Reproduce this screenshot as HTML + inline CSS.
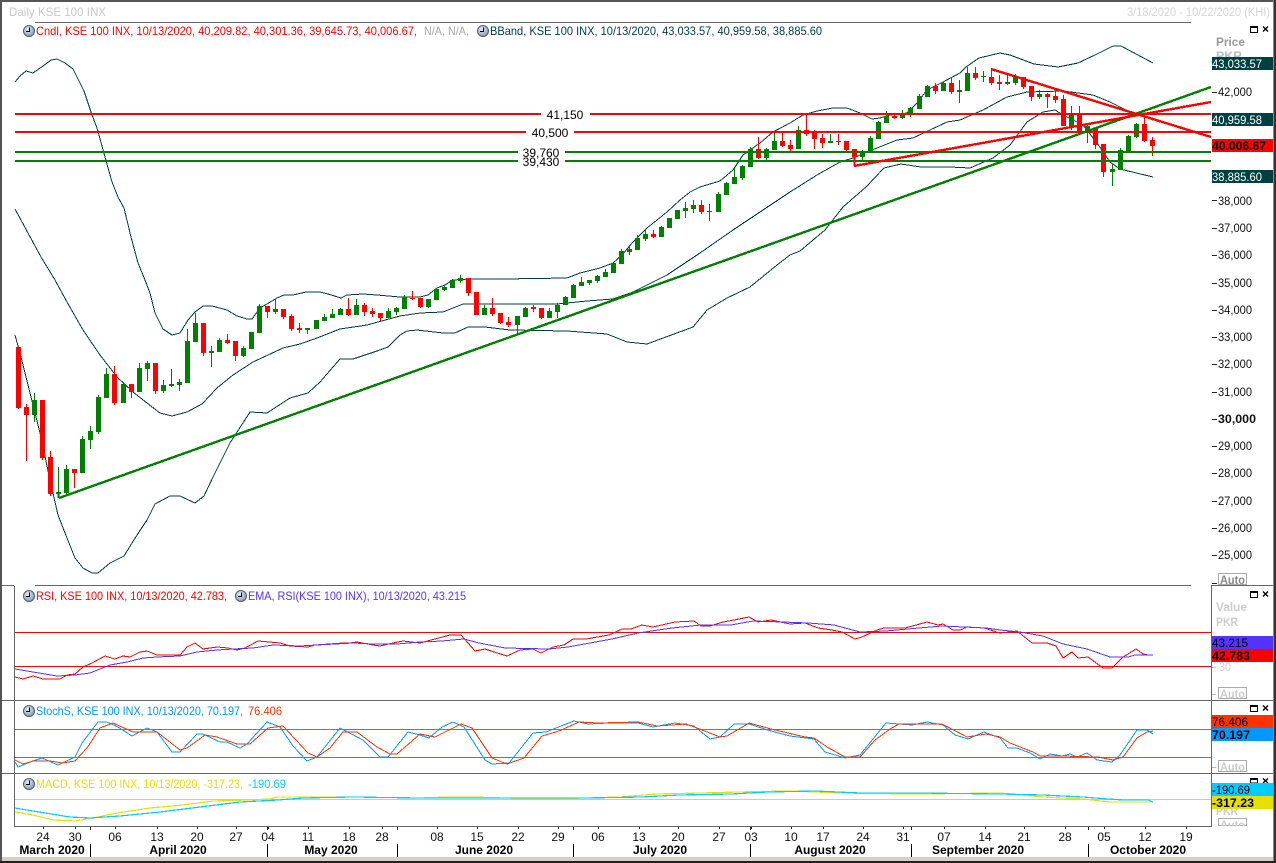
<!DOCTYPE html>
<html>
<head>
<meta charset="utf-8">
<title>Daily KSE 100 INX</title>
<style>
html,body{margin:0;padding:0;background:#fff;width:1276px;height:863px;overflow:hidden}
svg{display:block;position:absolute;left:0;top:0}
text{font-family:"Liberation Sans",Arial,sans-serif;font-size:12px;white-space:pre}
.b{font-weight:bold}
.ax{fill:#111}
.sh{fill:none;shape-rendering:crispEdges}
.ln{fill:none;shape-rendering:crispEdges;stroke-width:1}
.fr{stroke:#666;stroke-width:1;fill:none;shape-rendering:crispEdges}
.tick{stroke:#222;stroke-width:1;fill:none;shape-rendering:crispEdges}
</style>
</head>
<body>
<svg width="1276" height="863" viewBox="0 0 1276 863" xmlns="http://www.w3.org/2000/svg">
<defs>
<radialGradient id="cg" cx="40%" cy="35%" r="70%"><stop offset="0" stop-color="#e4ecf4"/><stop offset="1" stop-color="#7f96b0"/></radialGradient>
<g id="clk"><circle cx="6" cy="6" r="5.5" fill="url(#cg)" stroke="#4d5d72" stroke-width="1"/><path d="M6.5 2.5V6.5H3" fill="none" stroke="#000" stroke-width="1" shape-rendering="crispEdges"/></g>
</defs>

<rect width="1276" height="863" fill="#fff"/>

<!-- bollinger bands -->
<g class="ln" stroke="#003c3c" fill="none">
<polyline class="ln" stroke="#003c3c" points="15,82 20,76 26,71 33,73 43,66 51,60 57,59 65,63 73,69 77,77 84,91 91,112 97,128 105,157 112,182 118,197 124,208 131,237 138,263 145,280 150,293 155,313 163,329 172,335 180,333 188,320 195,312 203,306 212,306 227,310 237,316 247,319 252,319 260,308 267,304 277,298 284,295 293,295 306,292 320,292 328,294 341,298 347,295 363,294 377,295 400,297 420,297 428,295 437,288 445,285 453,280 470,279 503,279 567,278 580,273 600,268 613,263 622,255 633,242 647,228 667,212 680,200 690,192 700,187 720,181 733,170 743,155 760,143 773,132 790,123 803,115 817,111 833,108 847,108 860,113 872,119 880,118 890,115 907,113 917,103 927,90 943,82 960,73 966,67 979,58 1000,53 1010,55 1034,64 1058,67 1078,63 1095,55 1113,46 1121,46 1153,63"/>
<polyline class="ln" stroke="#003c3c" points="15,209 28,233 41,257 55,280 67,302 83,330 100,355 117,377 133,392 147,403 160,413 172,416 187,412 202,404 217,388 233,375 253,362 283,348 300,344 317,338 340,329 367,325 400,316 420,313 443,312 463,304 500,304 557,304 587,301 613,299 633,292 667,275 700,253 733,230 763,210 790,192 817,175 840,162 853,158 877,148 897,140 913,138 930,130 947,122 960,120 983,110 1007,97 1027,92 1063,91 1093,95 1110,102 1130,112 1153,120"/>
<polyline class="ln" stroke="#003c3c" points="15,335 20,353 30,393 40,433 50,480 58,515 67,538 75,558 83,568 92,573 98,573 110,563 124,556 137,535 147,520 155,504 170,496 180,496 195,503 204,496 213,477 230,443 250,412 267,413 290,398 308,393 320,382 340,359 353,359 377,351 388,347 400,335 407,331 417,330 443,333 455,333 468,327 485,327 510,330 567,331 607,334 627,342 647,344 693,327 707,310 727,298 750,287 777,265 790,255 800,251 825,230 843,207 866,187 884,168 901,164 921,167 950,167 970,168 993,158 1010,145 1027,122 1043,112 1055,110 1063,115 1083,125 1097,143 1110,162 1120,169 1153,177"/>
</g>

<!-- candles -->
<g transform="translate(.5 0)">
<path class="sh" stroke="#008000" stroke-width="1" d="M34 393V422M58 467V494M66 465V494M82 436V473M90 426V449M98 395V434M106 368V398M123 382V403M139 363V392M147 361V381M163 380V393M171 369V387M179 379V391M187 329V383M195 313V342M211 346V367M219 338V352M243 346V357M251 332V349M259 304V333M275 299V314M307 328V334M316 320V329M324 314V321M332 309V318M340 308V315M356 299V315M388 308V318M396 307V315M404 295V309M428 299V308M436 288V300M444 286V291M452 279V288M460 275V283M484 305V315M517 316V334M525 307V317M549 308V318M557 303V318M565 296V305M573 284V298M581 277V286M589 280V285M597 275V283M605 269V277M613 263V273M621 249V264M629 246V255M637 235V250M645 229V241M661 226V237M669 218V228M677 210V219M685 202V218M693 200V213M709 204V221M718 192V212M726 182V195M734 168V184M742 165V180M750 147V167M766 148V160M774 133V150M798 126V149M830 134V143M862 150V160M870 136V152M878 121V139M886 111V123M902 110V119M910 107V117M919 94V109M927 85V97M943 82V91M959 80V103M967 67V91M983 71V82M1007 74V85M1015 74V85M1039 90V99M1071 106V130M1087 125V143M1112 164V186M1120 148V170M1128 135V152M1136 123V138"/>
<path class="sh" stroke="#008000" stroke-width="5" d="M34 400V415M58 492V494M66 469V493M82 439V473M90 431V440M98 397V432M106 374V398M123 384V403M139 368V392M147 363V369M163 385V391M171 384V386M179 382V385M187 341V383M195 323V342M211 351V353M219 340V352M243 348V356M251 332V349M259 306V333M275 309V312M307 328V330M316 320V329M324 317V321M332 314V318M340 309V315M356 305V315M388 311V318M396 308V312M404 297V309M428 299V307M436 289V300M444 287V290M452 280V288M460 278V281M484 308V315M517 316V325M525 308V317M549 311V318M557 305V312M565 297V305M573 285V298M581 282V286M589 280V283M597 276V281M605 272V277M613 263V273M621 251V264M629 249V252M637 238V250M645 234V239M661 227V237M669 218V228M677 210V219M685 208V211M693 205V209M709 211V212M718 194V212M726 183V195M734 177V184M742 166V178M750 149V167M766 149V158M774 141V150M798 130V149M830 141V143M862 153V157M870 138V152M878 122V139M886 116V123M902 115V118M910 108V115M919 96V109M927 86V97M943 83V91M959 90V92M967 73V91M983 76V77M1007 82V84M1015 77V83M1039 94V97M1071 115V126M1087 126V132M1112 169V172M1120 150V170M1128 136V152M1136 124V137"/>
<path class="sh" stroke="#f00" stroke-width="1" d="M18 347V409M26 404V461M42 400V460M50 451V496M74 469V488M114 366V405M131 384V398M155 363V394M203 323V356M227 334V344M235 341V361M267 306V318M283 309V319M291 314V331M299 323V333M348 298V316M364 303V316M372 308V317M380 313V321M412 291V300M420 298V308M468 278V296M476 292V315M492 298V316M500 313V324M508 317V327M533 305V312M541 308V319M653 230V238M701 200V214M758 137V159M782 132V147M790 140V151M806 114V136M814 130V149M822 134V148M838 134V145M846 141V151M854 149V160M894 115V119M935 83V94M951 77V94M975 67V80M991 68V85M999 75V90M1023 77V89M1031 86V101M1047 93V108M1055 89V103M1063 95V126M1079 106V134M1095 128V149M1103 144V177M1144 117V142M1152 137V156"/>
<path class="sh" stroke="#f00" stroke-width="5" d="M18 347V408M26 407V415M42 400V458M50 457V494M74 469V473M114 374V403M131 384V392M155 363V391M203 323V353M227 340V343M235 341V356M267 306V312M283 309V317M291 316V329M299 328V330M348 309V315M364 305V312M372 311V314M380 313V318M412 298V299M420 298V307M468 278V293M476 292V315M492 308V314M500 313V323M508 322V325M533 307V309M541 308V318M653 234V237M701 205V212M758 149V158M782 141V146M790 145V149M806 130V134M814 132V139M822 138V143M838 141V142M846 141V150M854 149V157M894 116V118M935 86V91M951 83V92M975 73V78M991 77V83M999 82V84M1023 77V87M1031 86V97M1047 94V97M1055 96V100M1063 99V126M1079 115V133M1095 128V145M1103 144V172M1144 124V141M1152 140V146"/>
</g>

<!-- horizontal levels -->
<g class="sh" stroke-width="2">
<path stroke="#f00" d="M15 114H541M590 114H1211M15 132H526M574 132H1211"/>
<path stroke="#008000" d="M15 152H518M565 152H1211M15 161H518M565 161H1211"/>
</g>
<!-- trend lines -->
<g class="sh" stroke-width="2.4">
<path stroke="#008000" d="M59 498L1211 87"/>
<path stroke="#008000" d="M58.5 492V498"/>
<path stroke="#f00" d="M854 166L1211 102"/>
<path stroke="#f00" d="M854.5 152V166"/>
<path stroke="#f00" d="M991 69L1211 137"/>
</g>
<text x="565" y="119" text-anchor="middle" fill="#000">41,150</text>
<text x="550" y="137" text-anchor="middle" fill="#000">40,500</text>
<text x="541" y="157" text-anchor="middle" fill="#000">39,760</text>
<text x="541" y="166" text-anchor="middle" fill="#000">39,430</text>

<!-- title -->
<text x="9" y="16" fill="#c8c8c8" textLength="97" lengthAdjust="spacingAndGlyphs">Daily KSE 100 INX</text>
<text x="1127" y="16" fill="#d4d4d4" textLength="143" lengthAdjust="spacingAndGlyphs">3/18/2020 - 10/22/2020 (KHI)</text>

<!-- legend main -->
<use href="#clk" x="23" y="25"/>
<text x="36" y="35" fill="#f00" textLength="381" lengthAdjust="spacingAndGlyphs">Cndl, KSE 100 INX, 10/13/2020, 40,209.82, 40,301.36, 39,645.73, 40,006.67,</text>
<text x="424" y="35" fill="#aaa" textLength="45" lengthAdjust="spacingAndGlyphs">N/A, N/A,</text>
<use href="#clk" x="477" y="25"/>
<text x="490" y="35" fill="#003c3c" textLength="332" lengthAdjust="spacingAndGlyphs">BBand, KSE 100 INX, 10/13/2020, 43,033.57, 40,959.58, 38,885.60</text>

<!-- right axis main -->
<text x="1216" y="46" class="b" fill="#999" textLength="29" lengthAdjust="spacingAndGlyphs">Price</text>
<text x="1216" y="60" class="b" fill="#bbb" textLength="26" lengthAdjust="spacingAndGlyphs">PKR</text>
<path class="tick" d="M1212 92.500H1217M1212 200.500H1217M1212 228.500H1217M1212 255.500H1217M1212 283.500H1217M1212 310.500H1217M1212 337.500H1217M1212 364.500H1217M1212 392.500H1217M1212 419.500H1217M1212 446.500H1217M1212 473.500H1217M1212 501.500H1217M1212 528.500H1217M1212 555.500H1217M1212 583.500H1217"/>
<g class="ax">
<text x="1218" y="96" textLength="34" lengthAdjust="spacingAndGlyphs">42,000</text>
<text x="1218" y="205" textLength="34" lengthAdjust="spacingAndGlyphs">38,000</text>
<text x="1218" y="232" textLength="34" lengthAdjust="spacingAndGlyphs">37,000</text>
<text x="1218" y="259" textLength="34" lengthAdjust="spacingAndGlyphs">36,000</text>
<text x="1218" y="287" textLength="34" lengthAdjust="spacingAndGlyphs">35,000</text>
<text x="1218" y="314" textLength="34" lengthAdjust="spacingAndGlyphs">34,000</text>
<text x="1218" y="341" textLength="34" lengthAdjust="spacingAndGlyphs">33,000</text>
<text x="1218" y="368" textLength="34" lengthAdjust="spacingAndGlyphs">32,000</text>
<text x="1218" y="396" textLength="34" lengthAdjust="spacingAndGlyphs">31,000</text>
<text x="1218" y="423" class="b" textLength="38" lengthAdjust="spacingAndGlyphs">30,000</text>
<text x="1218" y="450" textLength="34" lengthAdjust="spacingAndGlyphs">29,000</text>
<text x="1218" y="477" textLength="34" lengthAdjust="spacingAndGlyphs">28,000</text>
<text x="1218" y="505" textLength="34" lengthAdjust="spacingAndGlyphs">27,000</text>
<text x="1218" y="532" textLength="34" lengthAdjust="spacingAndGlyphs">26,000</text>
<text x="1218" y="559" textLength="34" lengthAdjust="spacingAndGlyphs">25,000</text>
</g>
<rect x="1212" y="57" width="61" height="13" fill="#004040"/>
<text x="1212" y="68" fill="#fff" textLength="50" lengthAdjust="spacingAndGlyphs">43,033.57</text>
<rect x="1212" y="113" width="61" height="13" fill="#004040"/>
<text x="1212" y="124" fill="#fff" textLength="50" lengthAdjust="spacingAndGlyphs">40,959.58</text>
<rect x="1212" y="139" width="61" height="13" fill="#f00"/>
<text x="1212" y="150" class="b" fill="#000" textLength="54" lengthAdjust="spacingAndGlyphs">40,006.67</text>
<rect x="1212" y="170" width="61" height="13" fill="#004040"/>
<text x="1212" y="181" fill="#fff" textLength="50" lengthAdjust="spacingAndGlyphs">38,885.60</text>

<!-- panel frames -->
<g class="fr">
<path d="M35 22.500H1191"/>
<path d="M0 585.500H14M35 585.500H1191M1212 585.500H1274"/>
<path d="M14.500 586V826"/>
<path d="M1211.500 585V826"/>
<path d="M2 700.500H1273M2 773.500H1273"/>
<path d="M14 826.500H1212"/>
</g>

<!-- window buttons -->
<g fill="none" stroke="#000" shape-rendering="crispEdges">
<path d="M1250.500 26.500H1257.500V32.500H1250.500ZM1250 27.500H1258"/>
<path d="M1250.500 591.500H1257.500V597.500H1250.500ZM1250 592.500H1258"/>
<path d="M1250.500 705.500H1257.500V711.500H1250.500ZM1250 706.500H1258"/>
<path d="M1250.500 778.500H1257.500V783H1250.500ZM1250 779.500H1258"/>
</g>
<g fill="none" stroke="#000" stroke-width="1.4">
<path d="M1263 26.500L1268 31.500M1268 26.500L1263 31.500"/>
<path d="M1263 591.500L1268 596.500M1268 591.500L1263 596.500"/>
<path d="M1263 705.500L1268 710.500M1268 705.500L1263 710.500"/>
<path d="M1263 778.500L1268 783M1268 778.500L1263 783"/>
</g>

<!-- Auto boxes -->
<g fill="#fff" stroke="#aaa" shape-rendering="crispEdges">
<rect x="1218.500" y="573.500" width="28" height="11"/>
<rect x="1218.500" y="687.500" width="28" height="11"/>
<rect x="1218.500" y="760.500" width="28" height="11"/>
<rect x="1218.500" y="818.500" width="28" height="7"/>
</g>
<text x="1220" y="584" class="b" fill="#888" textLength="25" lengthAdjust="spacingAndGlyphs">Auto</text>
<text x="1220" y="698" class="b" fill="#ccc" textLength="25" lengthAdjust="spacingAndGlyphs">Auto</text>
<text x="1220" y="771" class="b" fill="#ccc" textLength="25" lengthAdjust="spacingAndGlyphs">Auto</text>
<svg x="1218" y="818" width="29" height="8"><text x="2" y="11" class="b" fill="#ccc" textLength="25" lengthAdjust="spacingAndGlyphs">Auto</text></svg>
<path class="tick" stroke="#aaa" style="stroke:#bbb" d="M1212 667.500H1216M1212 694.500H1216M1212 767.500H1216"/>

<!-- RSI panel -->
<path class="ln" stroke="#f00" d="M15 632.500H1211M15 666.500H1211"/>
<polyline class="ln" stroke="#f00" points="15,677 23,679 33,676 43,679 60,679 67,675 75,674 83,667 92,663 105,656 115,659 123,656 130,657 140,652 147,651 157,655 180,655 187,647 195,643 203,649 217,647 228,648 237,650 245,648 258,641 280,643 290,646 308,647 315,645 343,643 350,643 357,642 373,645 380,646 393,643 403,641 420,643 431,640 450,635 461,635 475,651 485,649 494,652 507,656 520,650 533,649 541,653 553,647 564,645 573,639 586,639 609,635 622,629 631,629 642,625 653,627 675,622 694,621 701,626 710,626 723,622 734,620 749,617 758,622 771,620 790,624 805,623 818,628 832,630 842,632 855,639 862,637 877,630 884,628 905,628 927,622 938,625 943,624 953,630 960,630 967,627 984,628 1000,633 1017,631 1032,643 1047,643 1056,646 1063,658 1072,652 1078,658 1088,657 1103,668 1112,668 1123,657 1136,649 1143,654 1148,655"/>
<polyline class="ln" stroke="#5533ff" points="15,669 33,672 57,676 75,675 90,673 110,665 127,662 143,658 157,657 180,656 197,652 217,650 233,649 253,648 273,645 300,646 317,645 353,643 373,644 397,644 420,642 442,641 464,639 479,643 505,648 549,649 568,647 612,639 638,633 672,628 701,625 731,625 753,621 783,622 808,623 834,625 860,632 886,631 919,628 942,626 986,628 1000,630 1020,632 1043,636 1063,644 1087,649 1110,657 1128,657 1135,655 1153,655"/>
<use href="#clk" x="23" y="590"/>
<text x="36" y="600" fill="#f00" textLength="191" lengthAdjust="spacingAndGlyphs">RSI, KSE 100 INX, 10/13/2020, 42.783,</text>
<use href="#clk" x="235" y="590"/>
<text x="248" y="600" fill="#5533ff" textLength="218" lengthAdjust="spacingAndGlyphs">EMA, RSI(KSE 100 INX), 10/13/2020, 43.215</text>
<text x="1216" y="611" class="b" fill="#ccc" textLength="31" lengthAdjust="spacingAndGlyphs">Value</text>
<text x="1216" y="626" class="b" fill="#ccc" textLength="22" lengthAdjust="spacingAndGlyphs">PKR</text>
<rect x="1212" y="636" width="61" height="13" fill="#5533ff"/>
<text x="1212" y="647" fill="#000" textLength="36" lengthAdjust="spacingAndGlyphs">43.215</text>
<rect x="1212" y="649" width="61" height="13" fill="#f00"/>
<text x="1212" y="660" class="b" fill="#000" textLength="38" lengthAdjust="spacingAndGlyphs">42.783</text>
<text x="1219" y="671" fill="#ccc" textLength="12" lengthAdjust="spacingAndGlyphs">30</text>

<!-- Stoch panel -->
<path class="ln" stroke="#0099ff" d="M15 729.500H1211M15 757.500H1211"/>
<polyline class="ln" stroke="#0099ff" points="15,762 18,767 30,762 42,758 58,765 75,757 82,743 98,722 107,722 118,727 132,736 147,728 157,732 172,752 180,752 197,734 203,734 220,742 227,742 240,748 247,744 267,722 280,727 293,746 307,761 317,757 340,728 363,740 380,757 388,757 408,732 420,735 429,738 442,727 453,722 464,727 485,760 492,764 509,763 533,733 546,732 561,726 574,721 588,724 609,723 638,723 653,727 675,723 694,726 710,739 720,737 734,724 749,724 771,731 790,736 814,739 825,752 845,758 860,755 886,723 912,725 927,722 943,725 955,735 968,739 984,732 1000,738 1008,748 1017,748 1030,753 1040,759 1050,754 1062,756 1070,754 1077,757 1087,753 1097,760 1112,762 1120,755 1137,730 1147,730 1153,734"/>
<polyline class="ln" stroke="#ff3300" points="15,760 23,764 33,761 50,761 62,763 75,761 87,748 100,728 113,723 133,732 157,732 180,750 187,748 205,735 217,737 237,744 250,744 268,728 283,726 308,753 317,757 330,748 343,732 357,732 377,747 390,754 397,754 420,734 435,737 461,724 472,728 492,758 507,764 524,758 542,736 559,731 579,722 598,723 638,722 657,726 686,724 697,728 720,737 727,736 749,723 771,729 805,737 814,738 827,747 845,757 860,757 875,740 890,729 899,724 942,724 967,737 986,734 1000,737 1010,743 1033,752 1040,756 1060,756 1098,757 1113,760 1123,757 1137,738 1147,732 1153,731"/>
<use href="#clk" x="23" y="705"/>
<text x="36" y="715" fill="#0099ff" textLength="207" lengthAdjust="spacingAndGlyphs">StochS, KSE 100 INX, 10/13/2020, 70.197,</text>
<text x="248" y="715" fill="#ff3300" textLength="34" lengthAdjust="spacingAndGlyphs">76.406</text>
<rect x="1212" y="715" width="61" height="13" fill="#ff3300"/>
<text x="1212" y="726" fill="#000" textLength="36" lengthAdjust="spacingAndGlyphs">76.406</text>
<rect x="1212" y="728" width="61" height="13" fill="#0099ff"/>
<text x="1212" y="739" class="b" fill="#000" textLength="38" lengthAdjust="spacingAndGlyphs">70.197</text>

<!-- MACD panel -->
<path class="ln" stroke="#e6e000" d="M15 799.500H1211"/>
<polyline class="sh" stroke="#e6e000" stroke-width="1.2" points="15,812 33,815 53,820 75,821 93,818 117,813 150,808 183,805 213,801 247,800 270,799 277,797 353,797 420,798 448,797 472,797 505,798 546,799 585,798 620,797 657,794 701,793 738,792 790,791 842,793 916,794 1000,793 1043,797 1083,799 1110,802 1133,802 1153,802"/>
<polyline class="sh" stroke="#00ccff" stroke-width="1.2" points="15,808 33,811 70,817 90,818 120,816 160,812 200,807 240,802 278,800 303,798 353,797 420,798 546,798 585,798 642,797 679,795 731,794 768,792 816,791 860,793 919,793 1000,794 1043,795 1083,797 1108,799 1123,800 1148,800 1153,802"/>
<use href="#clk" x="23" y="778"/>
<text x="36" y="788" fill="#e6e000" textLength="207" lengthAdjust="spacingAndGlyphs">MACD, KSE 100 INX, 10/13/2020, -317.23,</text>
<text x="248" y="788" fill="#00ccff" textLength="38" lengthAdjust="spacingAndGlyphs">-190.69</text>
<text x="1216" y="815" class="b" fill="#ccc" textLength="22" lengthAdjust="spacingAndGlyphs">PKR</text>
<rect x="1212" y="783" width="61" height="13" fill="#00ccff"/>
<text x="1212" y="794" fill="#000" textLength="38" lengthAdjust="spacingAndGlyphs">-190.69</text>
<rect x="1212" y="796" width="61" height="13" fill="#e6e000"/>
<text x="1212" y="807" class="b" fill="#000" textLength="42" lengthAdjust="spacingAndGlyphs">-317.23</text>

<!-- date axis -->
<path class="tick" d="M43.500 827V829M75.500 827V829M115.500 827V829M157.500 827V829M197.500 827V829M236.500 827V829M268.500 827V829M308.500 827V829M349.500 827V829M382.500 827V829M437.500 827V829M477.500 827V829M518.500 827V829M558.500 827V829M598.500 827V829M639.500 827V829M678.500 827V829M719.500 827V829M751.500 827V829M791.500 827V829M823.500 827V829M863.500 827V829M903.500 827V829M944.500 827V829M985.500 827V829M1024.500 827V829M1065.500 827V829M1104.500 827V829M1145.500 827V829M1186.500 827V829M90.500 827V830M267.500 827V830M397.500 827V830M573.500 827V830M750.500 827V830M911.500 827V830M1088.500 827V830"/>
<g fill="#111" text-anchor="middle">
<text x="43" y="841">24</text><text x="75" y="841">30</text><text x="115" y="841">06</text><text x="157" y="841">13</text><text x="197" y="841">20</text><text x="236" y="841">27</text><text x="268" y="841">04</text><text x="308" y="841">11</text><text x="349" y="841">18</text><text x="382" y="841">28</text><text x="437" y="841">08</text><text x="477" y="841">15</text><text x="518" y="841">22</text><text x="558" y="841">29</text><text x="598" y="841">06</text><text x="639" y="841">13</text><text x="678" y="841">20</text><text x="719" y="841">27</text><text x="751" y="841">03</text><text x="791" y="841">10</text><text x="823" y="841">17</text><text x="863" y="841">24</text><text x="903" y="841">31</text><text x="944" y="841">07</text><text x="985" y="841">14</text><text x="1024" y="841">21</text><text x="1065" y="841">28</text><text x="1104" y="841">05</text><text x="1145" y="841">12</text><text x="1186" y="841">19</text>
</g>
<g fill="#000" text-anchor="middle" class="b" font-weight="bold">
<text class="b" x="52" y="854">March 2020</text>
<text class="b" x="178" y="854">April 2020</text>
<text class="b" x="331" y="854">May 2020</text>
<text class="b" x="484" y="854">June 2020</text>
<text class="b" x="660" y="854">July 2020</text>
<text class="b" x="830" y="854">August 2020</text>
<text class="b" x="978" y="854">September 2020</text>
<text class="b" x="1148" y="854">October 2020</text>
</g>
<path class="tick" stroke="#000" style="stroke:#000" d="M90.500 844V857M267.500 844V857M397.500 844V857M573.500 844V857M750.500 844V857M911.500 844V857M1088.500 844V857"/>

<!-- outer frame -->
<rect x="2" y="857" width="1271" height="4" fill="#d4d0c8"/>
<rect x="0" y="0" width="1276" height="2" fill="#555"/>
<rect x="0" y="0" width="2" height="863" fill="#555"/>
<rect x="1273" y="0" width="1" height="863" fill="#888"/>
<rect x="1274" y="0" width="2" height="863" fill="#333"/>
<rect x="0" y="861" width="1276" height="2" fill="#222"/>
</svg>
</body>
</html>
